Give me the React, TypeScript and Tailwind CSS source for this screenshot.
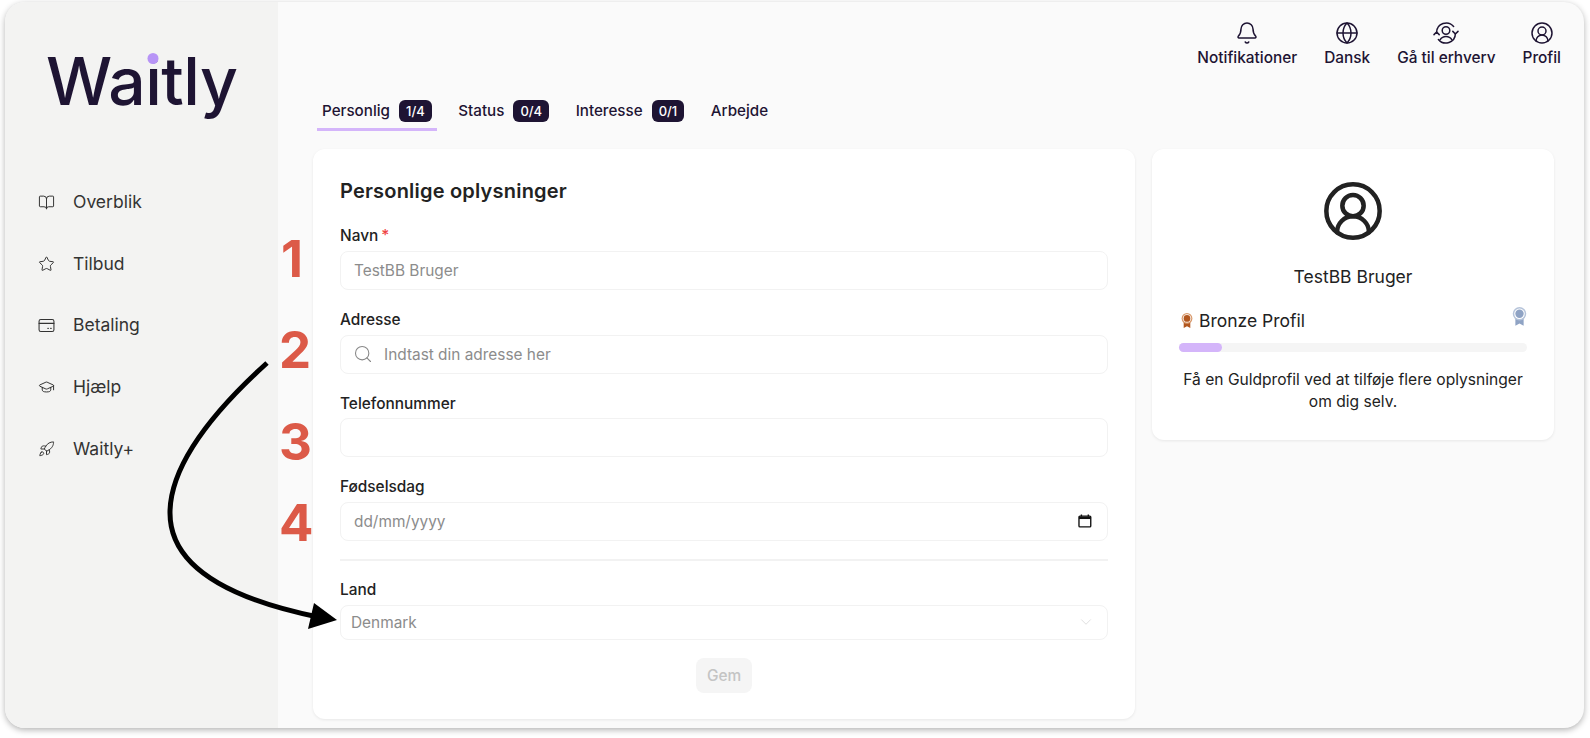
import React from 'react';
import { Bell, BookOpen, ChevronDown, CircleUserRound, Globe, GraduationCap, Rocket, Search, Star } from 'lucide-react';

const WalletIcon = () => (
    <svg width="17" height="17" viewBox="0 0 24 24" fill="none" stroke="#333" strokeWidth="1.5" strokeLinecap="round">
        <rect x="1.5" y="3.5" width="21" height="17" rx="2.5" />
        <path d="M1.5 9h21" />
        <path d="M14 16h.5M18 16h.5" strokeWidth="2" />
    </svg>
);

const SwitchIcon = () => (
    <svg width="26" height="24" viewBox="0 0 26 24" fill="none" stroke="#1e1433" strokeWidth="1.5" strokeLinecap="round" strokeLinejoin="round">
        <circle cx="13" cy="9.5" r="3.8" />
        <path d="M7.2 18.6c1.4-2.4 3.2-3.2 5.8-3.2s4.4.8 5.8 3.2" />
        <path d="M3.6 11.5a9.6 9.6 0 0 1 17-6" />
        <path d="M22.4 12.5a9.6 9.6 0 0 1-17 6" />
        <path d="M1 13.6 3.6 11l2.6 2.6" />
        <path d="M25 10.4 22.4 13l-2.6-2.6" />
    </svg>
);

const Medal = ({ fill, light, size }: { fill: string; light: string; size: number }) => (
    <svg width={size} height={size * 1.3} viewBox="0 0 20 26">
        <path d="M4.5 13v12l5.5-3 5.5 3V13z" fill={fill} />
        <circle cx="10" cy="9" r="9" fill={light} />
        <circle cx="10" cy="9" r="7" fill="#fff" />
        <circle cx="10" cy="9" r="5.6" fill={fill} />
    </svg>
);

const CalendarIcon = () => (
    <svg width="14" height="14" viewBox="0 0 14 14" fill="none">
        <rect x="1" y="2" width="12" height="11" rx="1" stroke="#111" strokeWidth="1.4" />
        <path d="M1 2.5h12V5H1z" fill="#111" />
        <path d="M3.5 0.5v2M10.5 0.5v2" stroke="#111" strokeWidth="1.4" />
    </svg>
);

const navItems = [
    { label: 'Overblik', icon: <BookOpen size={17} strokeWidth={1.4} color="#333" /> },
    { label: 'Tilbud', icon: <Star size={18} strokeWidth={1.4} color="#333" /> },
    { label: 'Betaling', icon: <WalletIcon /> },
    { label: 'Hjælp', icon: <GraduationCap size={20} strokeWidth={1.4} color="#333" /> },
    { label: 'Waitly+', icon: <Rocket size={18} strokeWidth={1.4} color="#333" /> },
];

const topItems = [
    { label: 'Notifikationer', icon: <Bell size={24} strokeWidth={1.5} color="#1e1433" /> },
    { label: 'Dansk', icon: <Globe size={24} strokeWidth={1.5} color="#1e1433" /> },
    { label: 'Gå til erhverv', icon: <SwitchIcon /> },
    { label: 'Profil', icon: <CircleUserRound size={24} strokeWidth={1.5} color="#1e1433" /> },
];

const tabs = [
    { label: 'Personlig', badge: '1/4', active: true },
    { label: 'Status', badge: '0/4' },
    { label: 'Interesse', badge: '0/1' },
    { label: 'Arbejde' },
];

const inputBox = 'flex items-center w-full bg-white border border-[#f2f2f2] rounded-lg';
const inputText = 'w-full bg-transparent outline-none text-[15.4px] text-[#333] placeholder:text-[#8c8c8c]';

const Field: React.FC<{ label: string; required?: boolean; children: React.ReactNode }> = ({ label, required, children }) => (
    <div>
        <label className="flex h-5 mb-[5px] items-center text-[15.4px] font-medium text-[#222]">
            {label}
            {required && <span className="text-[#ef4444] ml-[3px]">*</span>}
        </label>
        {children}
    </div>
);

const App: React.FC = () => {
    return (
        <div className="relative w-full h-[738px] bg-white overflow-hidden font-['Inter',sans-serif]">
            <div className="ml-[5px] mt-[2px] w-[1579px] h-[726px] flex rounded-[20px] overflow-hidden bg-[#fafafa] shadow-[0_2px_6px_rgba(0,0,0,0.3)]">
                <aside className="w-[273px] shrink-0 bg-[#f3f3f2]">
                    <div className="pl-[41px] pt-[39px] h-[190px]">
                        <span className="text-[66px] leading-[80px] font-medium tracking-[-0.5px] text-[#1e1433]">
                            Wa
                            <span className="relative">
                                i
                                <span className="absolute left-1/2 top-[12px] -translate-x-1/2 w-[11px] h-[11px] rounded-full bg-[#b794f6]" />
                            </span>
                            tly
                        </span>
                    </div>
                    <nav className="flex flex-col gap-[41.8px] pl-[33px]">
                        {navItems.map(item => (
                            <div key={item.label} className="flex items-center h-5 text-[17.5px] text-[#333]">
                                <span className="w-[17px] flex justify-center">{item.icon}</span>
                                <span className="ml-[18px]">{item.label}</span>
                            </div>
                        ))}
                    </nav>
                </aside>

                <main className="flex-1 pl-[35px] pr-[30px]">
                    <div className="flex justify-end gap-[27px] pt-[19px] -mr-[7px] h-[70px]">
                        {topItems.map(item => (
                            <div key={item.label} className="flex flex-col items-center text-[15.4px] font-medium text-[#1e1433]">
                                {item.icon}
                                <span className="mt-[3px] leading-5">{item.label}</span>
                            </div>
                        ))}
                    </div>

                    <div className="flex gap-[16.5px] h-[59px] pt-[28px] pl-[4px]">
                        {tabs.map(tab => (
                            <div key={tab.label} className={`flex items-start gap-[9px] px-[5px] h-[31px] border-b-[3px] ${tab.active ? 'border-[#d4b5fa]' : 'border-transparent'}`}>
                                <span className="text-[15.2px] font-medium leading-[22px] text-[#1e1433]">{tab.label}</span>
                                {tab.badge && (
                                    <span className="bg-[#1e1433] text-white rounded-md text-[13px] font-medium h-[22px] px-[7px] leading-[22px]">{tab.badge}</span>
                                )}
                            </div>
                        ))}
                    </div>

                    <div className="flex items-start gap-[17px] mt-[18px]">
                        <section className="w-[822px] h-[570px] bg-white rounded-xl shadow-[0_1px_3px_rgba(0,0,0,0.08)] px-[27px] pt-[28px]">
                            <h2 className="text-[20px] leading-7 font-semibold tracking-[0.2px] text-[#222] mb-[21px]">Personlige oplysninger</h2>
                            <div className="flex flex-col gap-[19.6px]">
                                <Field label="Navn" required>
                                    <div className={`${inputBox} h-[39px] px-[13px]`}>
                                        <input className={inputText} placeholder="TestBB Bruger" disabled />
                                    </div>
                                </Field>
                                <Field label="Adresse">
                                    <div className={`${inputBox} h-[39px] pl-[12px] pr-[13px] gap-[11px]`}>
                                        <Search size={20} strokeWidth={1.3} color="#888" className="shrink-0" />
                                        <input className={inputText} placeholder="Indtast din adresse her" />
                                    </div>
                                </Field>
                                <Field label="Telefonnummer">
                                    <div className={`${inputBox} h-[39px] px-[13px]`}>
                                        <input className={inputText} />
                                    </div>
                                </Field>
                                <Field label="Fødselsdag">
                                    <div className={`${inputBox} h-[39px] pl-[13px] pr-[15px]`}>
                                        <input className={inputText} placeholder="dd/mm/yyyy" />
                                        <CalendarIcon />
                                    </div>
                                </Field>
                            </div>
                            <div className="h-[2px] bg-[#f2f2f2] mt-[18px] mb-[19px]" />
                            <Field label="Land">
                                <div className={`${inputBox} h-[35px] mt-[3px] pl-[10px] pr-[12px] justify-between`}>
                                    <span className="text-[15.4px] text-[#8c8c8c]">Denmark</span>
                                    <ChevronDown size={18} strokeWidth={1.2} color="#dcdcdc" />
                                </div>
                            </Field>
                            <div className="flex justify-center mt-[18px]">
                                <button disabled className="w-[56px] h-[35px] rounded-lg bg-[#f5f5f5] text-[15.4px] font-medium text-[#c4c4c4]">Gem</button>
                            </div>
                        </section>

                        <aside className="w-[402px] h-[291px] bg-white rounded-xl shadow-[0_1px_3px_rgba(0,0,0,0.08)] px-[27px] pt-[30px] flex flex-col items-center">
                            <CircleUserRound size={64} strokeWidth={1.7} color="#222" />
                            <p className="mt-[22px] text-[17.5px] leading-6 text-[#222]">TestBB Bruger</p>
                            <div className="w-full mt-[10px] h-[30px] flex items-start justify-between pl-[2px]">
                                <div className="flex items-center gap-[6px] mt-[10px]">
                                    <Medal fill="#b2571f" light="#d99a6c" size={12} />
                                    <span className="text-[17.5px] leading-6 text-[#222]">Bronze Profil</span>
                                </div>
                                <div className="mt-[8px]">
                                    <Medal fill="#8fa3c4" light="#b6c4da" size={15} />
                                </div>
                            </div>
                            <div className="w-full h-[9px] mt-[14px] rounded-full bg-[#f5f5f5]">
                                <div className="h-full rounded-full bg-[#d4b5fa]" style={{ width: `${(43 / 348) * 100}%` }} />
                            </div>
                            <p className="mt-[17px] text-[15.6px] leading-[22px] text-center text-[#222]">
                                Få en Guldprofil ved at tilføje flere oplysninger<br />om dig selv.
                            </p>
                        </aside>
                    </div>
                </main>
            </div>

            <span className="absolute left-[281px] top-[231px] text-[51px] leading-[56px] font-bold text-[#dc5a48]">1</span>
            <span className="absolute left-[279px] top-[322px] text-[51px] leading-[56px] font-bold text-[#dc5a48]">2</span>
            <span className="absolute left-[279px] top-[414px] text-[51px] leading-[56px] font-bold text-[#dc5a48]">3</span>
            <span className="absolute left-[279px] top-[495px] text-[51px] leading-[56px] font-bold text-[#dc5a48]">4</span>

            <svg className="absolute left-0 top-0 pointer-events-none" width="1590" height="738" fill="none">
                <path d="M267 363C215 410 170 465 170 513C170 570 235 600 318 617" stroke="#000" strokeWidth="5" />
                <path d="M337 620L314 603L308 629Z" fill="#000" />
            </svg>
        </div>
    );
};

export default App;
